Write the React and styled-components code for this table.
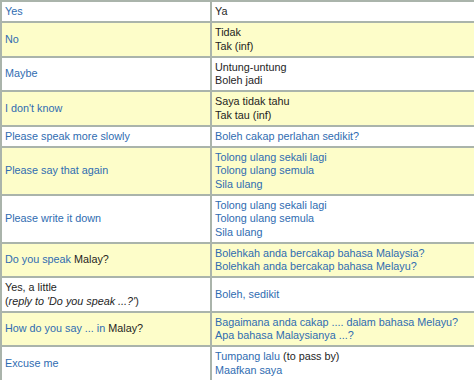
import React from 'react';
import styled, { createGlobalStyle } from 'styled-components';

const GlobalStyle = createGlobalStyle`
  html, body {
    margin: 0;
    padding: 0;
    background: #ffffff;
    overflow: hidden;
  }
`;

const PhraseTable = styled.table`
  width: 484px;
  border-collapse: collapse;
  table-layout: fixed;
  font-family: "Liberation Sans", Arial, sans-serif;
  font-size: 10.8px;
  line-height: 13.5px;
  border: 2px solid #aab4ab;
`;

const Row = styled.tr`
  background: ${(p) => (p.$alt ? '#fdfdc9' : '#ffffff')};
`;

const Cell = styled.td`
  border: 2px solid #aab4ab;
  padding: 3px 4px 2.5px 3px;
  vertical-align: middle;
  color: ${(p) => (p.$dark ? '#1e1e1e' : '#2f6cb1')};
  white-space: nowrap;
  overflow: hidden;
`;

const LeftCell = styled(Cell)`
  width: 201px;
`;

const Dark = styled.span`
  color: #1e1e1e;
`;

const Note = styled.span`
  color: #1e1e1e;
  i {
    font-style: italic;
  }
`;

const Line = styled.div``;

const phrases = [
  { en: 'Yes', ms: ['Ya'], msDark: true },
  { en: 'No', ms: ['Tidak', 'Tak (inf)'], msDark: true },
  { en: 'Maybe', ms: ['Untung-untung', 'Boleh jadi'], msDark: true },
  { en: "I don't know", ms: ['Saya tidak tahu', 'Tak tau (inf)'], msDark: true },
  { en: 'Please speak more slowly', ms: ['Boleh cakap perlahan sedikit?'] },
  { en: 'Please say that again', ms: ['Tolong ulang sekali lagi', 'Tolong ulang semula', 'Sila ulang'] },
  { en: 'Please write it down', ms: ['Tolong ulang sekali lagi', 'Tolong ulang semula', 'Sila ulang'] },
  {
    en: <>Do you speak <Dark>Malay?</Dark></>,
    ms: ['Bolehkah anda bercakap bahasa Malaysia?', 'Bolehkah anda bercakap bahasa Melayu?'],
  },
  {
    en: (
      <Note>
        <Line>Yes, a little</Line>
        <Line>(<i>reply to 'Do you speak ...?'</i>)</Line>
      </Note>
    ),
    ms: ['Boleh, sedikit'],
  },
  {
    en: <>How do you say ... in <Dark>Malay?</Dark></>,
    ms: ['Bagaimana anda cakap .... dalam bahasa Melayu?', 'Apa bahasa Malaysianya ...?'],
  },
  {
    en: 'Excuse me',
    ms: [<>Tumpang lalu <Dark>(to pass by)</Dark></>, 'Maafkan saya'],
  },
];

export default function App() {
  return (
    <>
      <GlobalStyle />
      <PhraseTable>
        <tbody>
          {phrases.map((item, index) => (
            <Row key={index} $alt={index % 2 === 1}>
              <LeftCell>{item.en}</LeftCell>
              <Cell $dark={item.msDark}>
                {item.ms.map((m, i) => (
                  <Line key={i}>{m}</Line>
                ))}
              </Cell>
            </Row>
          ))}
        </tbody>
      </PhraseTable>
    </>
  );
}
